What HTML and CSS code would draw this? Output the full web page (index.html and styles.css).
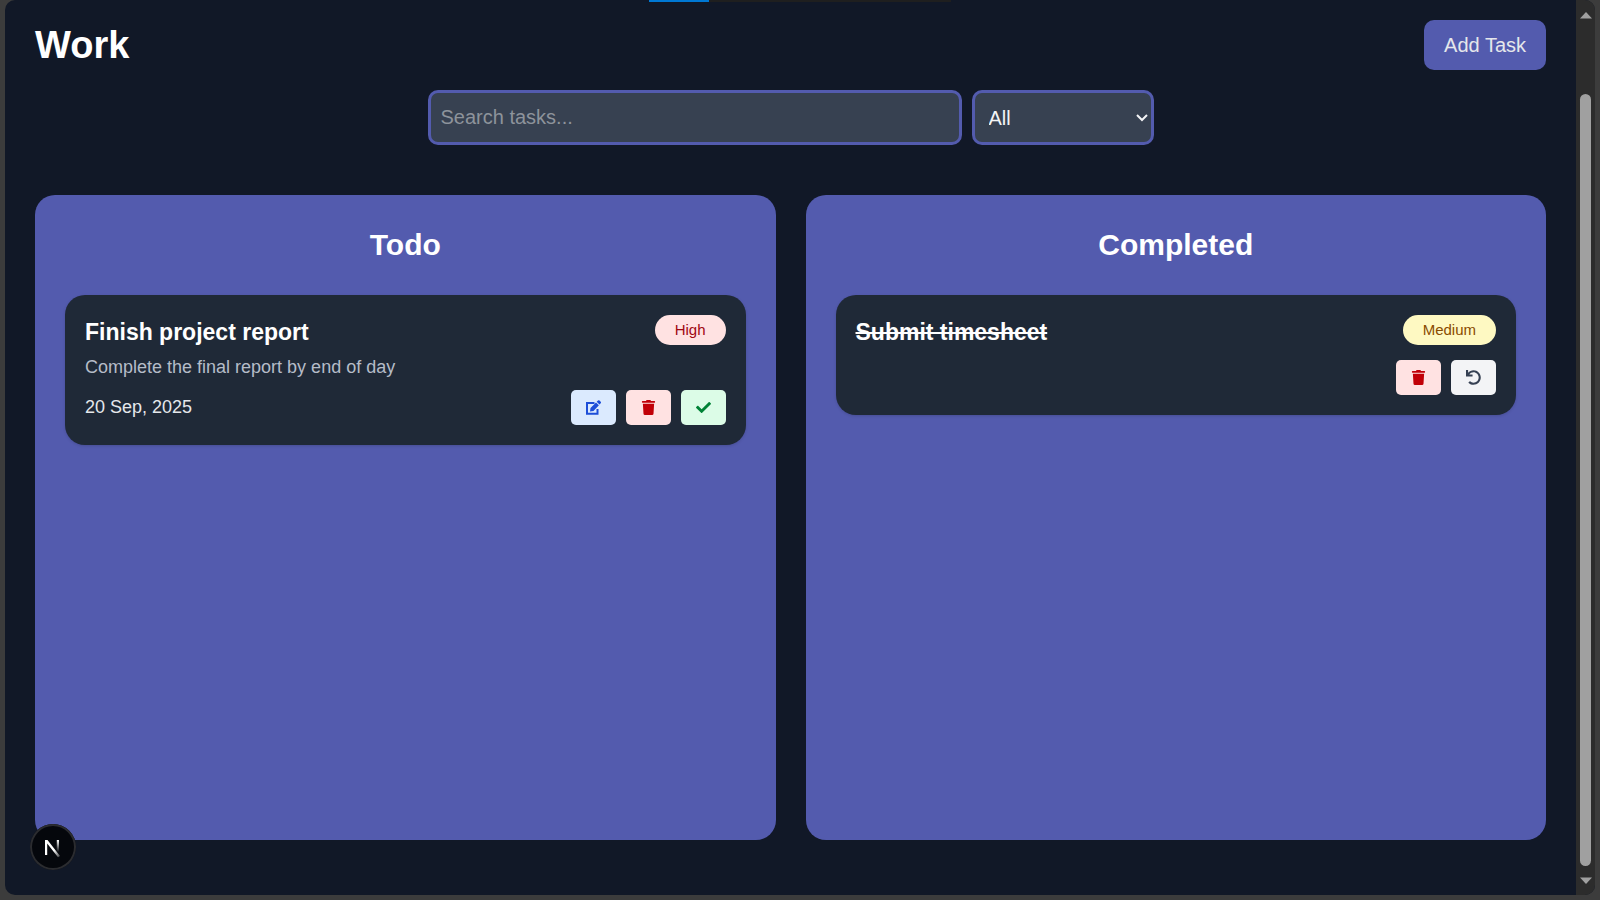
FILE: index.html
```html
<!DOCTYPE html>
<html lang="en">
<head>
<meta charset="utf-8">
<title>Work</title>
<link rel="stylesheet" href="styles.css">
</head>
<body>
<svg class="sprite" aria-hidden="true">
  <symbol id="edit" viewBox="0 0 15 15"><path fill="none" stroke="currentColor" stroke-width="2" d="M8.500 3H1v10.800h10.500V9"/><path fill="currentColor" d="M4 11.500l.5-3.600L10 2.400l2.900 2.900-5.400 5.600zM10.700 1.800l1.300-1.300q.8-.7 1.500 0l1.200 1.200q.7.800 0 1.500L13.500 4.600z"/></symbol>
  <symbol id="trash" viewBox="0 0 448 512"><path fill="currentColor" d="M432 32H312l-9.400-18.700A24 24 0 0 0 281.100 0H166.800a23.720 23.720 0 0 0-21.400 13.300L136 32H16A16 16 0 0 0 0 48v32a16 16 0 0 0 16 16h416a16 16 0 0 0 16-16V48a16 16 0 0 0-16-16zM53.200 467a48 48 0 0 0 47.900 45h245.800a48 48 0 0 0 47.900-45L416 128H32z"/></symbol>
  <symbol id="check" viewBox="0 0 512 512"><path fill="currentColor" d="M173.898 439.404l-166.400-166.400c-9.997-9.997-9.997-26.206 0-36.204l36.203-36.204c9.997-9.998 26.207-9.998 36.204 0L192 312.690 432.095 72.596c9.997-9.997 26.207-9.997 36.204 0l36.203 36.204c9.997 9.997 9.997 26.206 0 36.204l-294.400 294.401c-9.998 9.997-26.207 9.997-36.204-.001z"/></symbol>
  <symbol id="undo" viewBox="0 0 512 512"><path fill="currentColor" d="M212.333 224.333H12c-6.627 0-12-5.373-12-12V12C0 5.373 5.373 0 12 0h48c6.627 0 12 5.373 12 12v78.112C117.773 39.279 184.260 7.470 258.175 8.007c136.906.994 246.448 111.623 246.157 248.532C504.041 393.258 393.120 504 256.333 504c-64.089 0-122.496-24.313-166.510-64.215-5.099-4.622-5.334-12.554-.467-17.420l33.967-33.967c4.474-4.474 11.662-4.717 16.401-.525C170.760 415.336 211.580 432 256.333 432c97.268 0 176-78.716 176-176 0-97.267-78.716-176-176-176-58.496 0-110.280 28.476-142.274 72.333h98.274c6.627 0 12 5.373 12 12v48c0 6.627-5.373 12-12 12z"/></symbol>
</svg>
<div class="window">
  <div class="progress"><div class="progress-fill"></div></div>
  <main class="page">
    <header class="header">
      <h1>Work</h1>
      <button class="add" type="button">Add Task</button>
    </header>
    <form class="filters">
      <input class="field search" type="text" placeholder="Search tasks..." aria-label="Search tasks">
      <div class="select-wrap">
        <select class="field filter" aria-label="Filter by priority"><option>All</option><option>High</option><option>Medium</option><option>Low</option></select>
        <svg class="chevron" viewBox="0 0 12 8" aria-hidden="true"><path d="M1 1l5 5 5-5"/></svg>
      </div>
    </form>
    <div class="board">
      <section class="column">
        <h2>Todo</h2>
        <article class="card">
          <div class="card-head"><h3>Finish project report</h3><span class="badge high">High</span></div>
          <p class="desc">Complete the final report by end of day</p>
          <div class="card-foot">
            <time datetime="2025-09-20">20 Sep, 2025</time>
            <div class="actions">
              <button class="action edit" type="button" aria-label="Edit"><svg><use href="#edit"/></svg></button>
              <button class="action delete" type="button" aria-label="Delete"><svg><use href="#trash"/></svg></button>
              <button class="action done" type="button" aria-label="Complete"><svg><use href="#check"/></svg></button>
            </div>
          </div>
        </article>
      </section>
      <section class="column">
        <h2>Completed</h2>
        <article class="card">
          <div class="card-head"><h3 class="struck">Submit timesheet</h3><span class="badge medium">Medium</span></div>
          <div class="card-foot">
            <div class="actions">
              <button class="action delete" type="button" aria-label="Delete"><svg><use href="#trash"/></svg></button>
              <button class="action undo" type="button" aria-label="Undo"><svg><use href="#undo"/></svg></button>
            </div>
          </div>
        </article>
      </section>
    </div>
  </main>
  <div class="scrollbar" aria-hidden="true">
    <svg class="arrow" viewBox="0 0 12 7"><path d="M6 0l6 6.500H0z"/></svg>
    <div class="thumb"></div>
    <svg class="arrow" viewBox="0 0 12 7"><path d="M6 7L0 .5h12z"/></svg>
  </div>
</div>
<button class="dev" type="button" aria-label="Open developer tools">
  <svg viewBox="0 0 46 46">
    <defs>
      <linearGradient id="g1" x1="0" y1="0" x2="1" y2="1"><stop offset=".6" stop-color="#fff"/><stop offset="1" stop-color="#fff" stop-opacity=".2"/></linearGradient>
      <linearGradient id="g2" x1="0" y1="0" x2="0" y2="1"><stop offset="0" stop-color="#fff"/><stop offset="1" stop-color="#fff" stop-opacity="0"/></linearGradient>
    </defs>
    <path fill="url(#g1)" d="M15 16h2.500L30 32l-2 1.300L17.200 19.500V31H15z"/>
    <path fill="url(#g2)" d="M26.800 16h2.200v12h-2.200z"/>
  </svg>
</button>
</body>
</html>
```
FILE: styles.css
```css
* { box-sizing: border-box; }
body {
  margin: 0;
  min-height: 100vh;
  display: flex;
  padding: 0 5px 5px;
  background: #3c3c3c;
  color: #fff;
  font-family: "Liberation Sans", Arial, sans-serif;
}
h1, h2, h3, p { margin: 0; }
button, input, select { font: inherit; }
button { border: 0; cursor: pointer; }
.sprite { position: absolute; width: 0; height: 0; }

.window {
  position: relative;
  flex: 1;
  display: flex;
  border-radius: 10px;
  overflow: hidden;
  background: #111827;
}
.progress {
  position: absolute;
  top: 0;
  left: 50%;
  width: 302px;
  height: 2px;
  margin-left: -151px;
  background: #1f1f1f;
}
.progress-fill { width: 60px; height: 2px; background: #0078d4; }

.page {
  flex: 1;
  display: flex;
  flex-direction: column;
  padding: 20px 30px 55px;
}
.header { display: flex; justify-content: space-between; align-items: center; }
h1 { font-size: 38px; line-height: 50px; }
.add {
  height: 50px;
  padding: 0 20px;
  border-radius: 10px;
  background: #535bae;
  color: #e5e7eb;
  font-size: 20px;
}
.filters { display: flex; justify-content: center; gap: 10px; margin: 20px 0 50px; }
.field {
  height: 55px;
  border: 3px solid #535bae;
  border-radius: 10px;
  background: #374151;
  color: #f3f4f6;
  font-size: 20px;
}
.search { width: 534px; padding: 0 10px; }
.search::placeholder { color: #8d939b; opacity: 1; }
.select-wrap { position: relative; }
.filter { width: 182px; padding: 0 14px; appearance: none; }
.chevron {
  position: absolute;
  right: 6px;
  top: 24px;
  width: 12px;
  height: 8px;
  fill: none;
  stroke: #f3f4f6;
  stroke-width: 2;
  pointer-events: none;
}

.board { flex: 1; display: grid; grid-template-columns: 1fr 1fr; gap: 30px; }
.column { padding: 30px; border-radius: 20px; background: #535bae; }
h2 { margin-bottom: 30px; text-align: center; font-size: 30px; line-height: 40px; }
.card {
  padding: 20px;
  border-radius: 20px;
  background: #1f2937;
  box-shadow: 0 1px 3px rgba(0, 0, 0, 0.15);
}
.card-head { display: flex; justify-content: space-between; align-items: flex-start; }
h3 { font-size: 23px; line-height: 35px; }
.struck { text-decoration: line-through; }
.badge { padding: 0 20px; border-radius: 15px; font-size: 15px; line-height: 30px; }
.high { background: #ffe2e2; color: #9f0712; }
.medium { background: #fef9c2; color: #894b00; }
.desc { margin-top: 5px; color: #b5bcc8; font-size: 18px; line-height: 25px; }
.card-foot { display: flex; align-items: center; margin-top: 10px; color: #e5e7eb; font-size: 18px; }
.actions { display: flex; gap: 10px; margin-left: auto; }
.action {
  display: grid;
  place-items: center;
  width: 45px;
  height: 35px;
  padding: 0;
  border-radius: 5px;
}
.action svg { width: 15px; height: 15px; }
.edit { background: #dbeafe; color: #1d4ed8; }
.delete { background: #ffe2e2; color: #c10007; }
.done { background: #dcfce7; color: #008236; }
.undo { background: #f3f4f6; color: #364153; }

.scrollbar {
  width: 19px;
  display: flex;
  flex-direction: column;
  align-items: center;
  padding: 12px 0 11px;
  background: #2c2c2c;
}
.arrow { width: 12px; height: 7px; fill: #a0a0a0; }
.thumb { flex: 1; width: 11px; margin: 75px 0 11px; border-radius: 6px; background: #a0a0a0; }

.dev {
  position: fixed;
  left: 30px;
  bottom: 30px;
  width: 46px;
  height: 46px;
  padding: 0;
  border-radius: 50%;
  background: #05070c;
  box-shadow: inset 0 0 0 2px #2b2c30;
}
.dev svg { display: block; }
```
